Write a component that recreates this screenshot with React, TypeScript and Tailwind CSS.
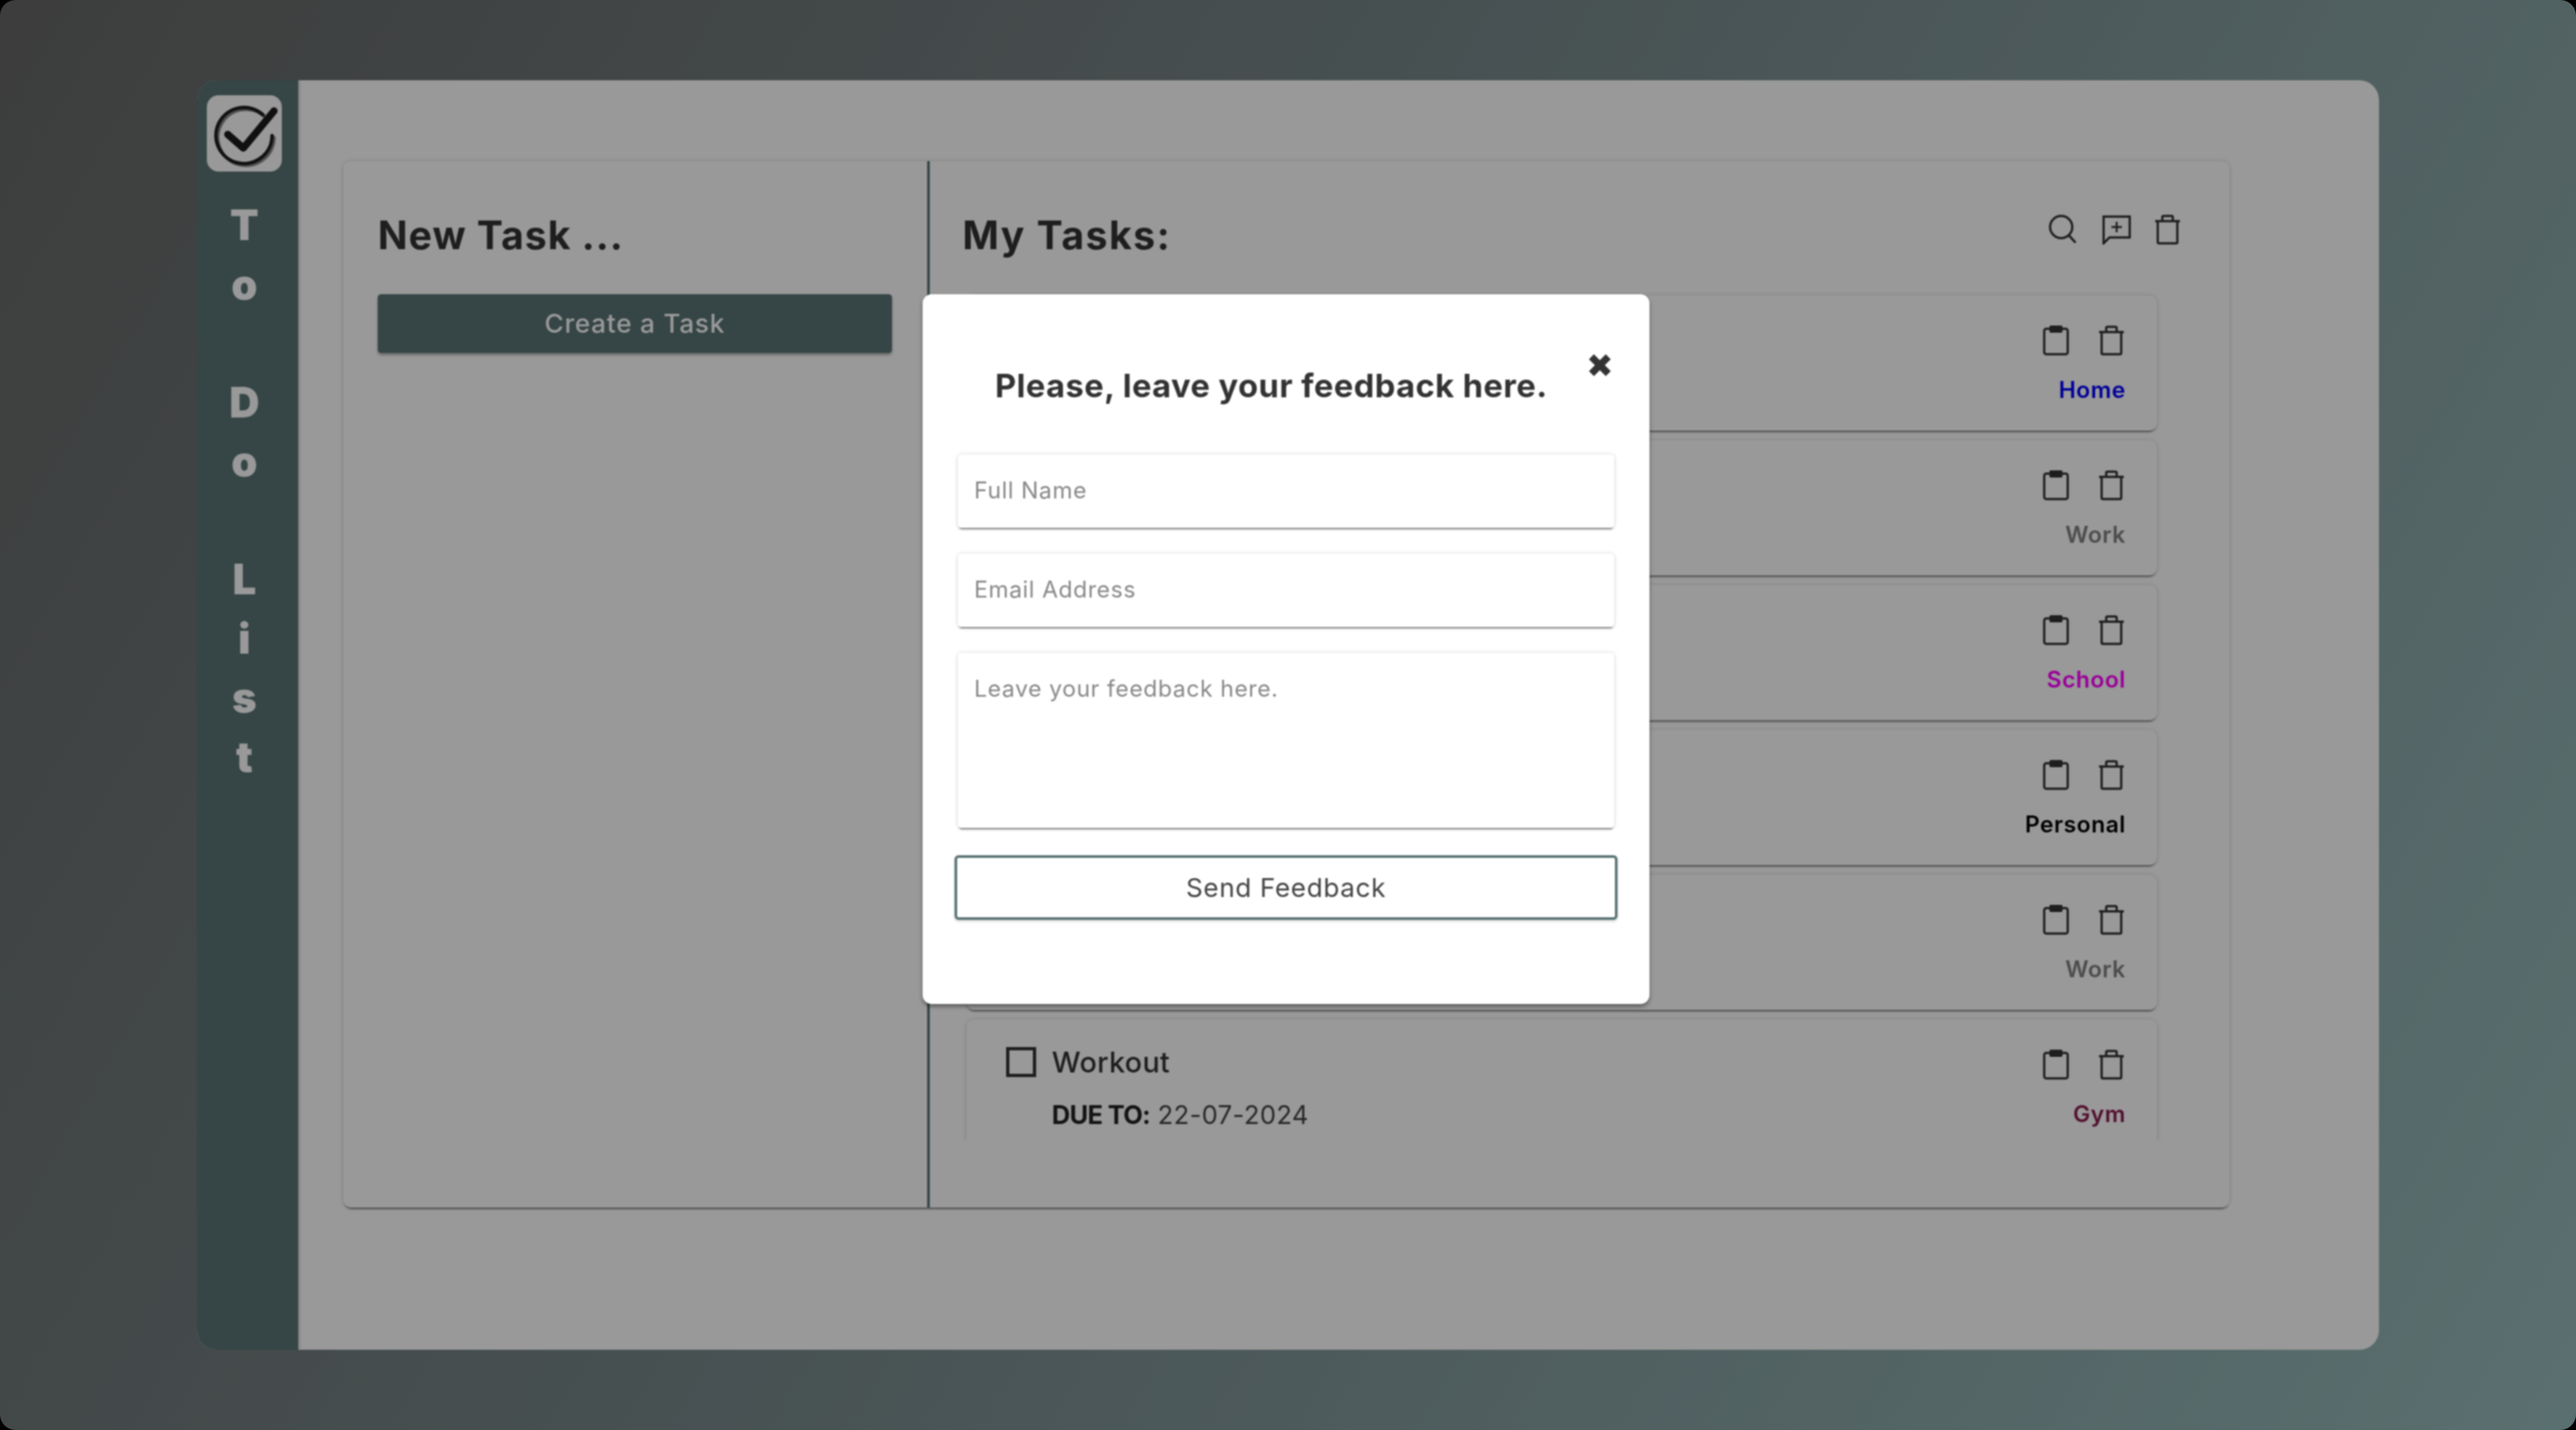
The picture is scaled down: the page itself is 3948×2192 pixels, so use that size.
const paperShadow = "shadow-[0_5px_3px_-3px_rgba(0,0,0,0.45),0_2px_3px_rgba(0,0,0,0.1),0_0_7px_rgba(0,0,0,0.14)]";

type Task = { title?: string; due?: string; label: string; color: string };

const tasks: Task[] = [
  { label: "Home", color: "text-[#0000ff]" },
  { label: "Work", color: "text-[#808080]" },
  { label: "School", color: "text-[#ff00ff]" },
  { label: "Personal", color: "text-black" },
  { label: "Work", color: "text-[#808080]" },
  { title: "Workout", due: "22-07-2024", label: "Gym", color: "text-[#8b1a4f]" },
];

const sideLetters = ["T", "o", "", "D", "o", "", "L", "i", "s", "t"];

function TrashIcon({ className }: { className: string }) {
  return (
    <svg viewBox="0 0 40 46" fill="none" stroke="#333" strokeWidth="3.5" className={className}>
      <path d="M12 9V4a2 2 0 0 1 2-2h12a2 2 0 0 1 2 2v5" />
      <path d="M1 10h38" />
      <path d="M5 10v32a2 2 0 0 0 2 2h26a2 2 0 0 0 2-2V10" />
    </svg>
  );
}

function ClipboardIcon() {
  return (
    <svg viewBox="0 0 40 46" fill="none" stroke="#333" strokeWidth="3.5" className="w-[40px] h-[46px]">
      <rect x="2" y="5" width="36" height="39" rx="3" />
      <rect x="10" y="0" width="20" height="11" rx="2" fill="#333" stroke="none" />
    </svg>
  );
}

function SearchIcon() {
  return (
    <svg viewBox="0 0 44 44" fill="none" stroke="#333" strokeWidth="3.5" className="w-[44px] h-[44px] mr-[3px]">
      <circle cx="20" cy="19" r="17" />
      <path d="M32 32l10 11" />
    </svg>
  );
}

function ChatPlusIcon() {
  return (
    <svg viewBox="0 0 44 46" fill="none" stroke="#333" strokeWidth="3.5" className="w-[44px] h-[46px]">
      <path d="M2 3h40v32H11l-9 9z" />
      <path d="M22 11v16M14 19h16" strokeWidth="3" />
    </svg>
  );
}

function Logo() {
  return (
    <svg viewBox="0 0 115 117" fill="none" className="w-[115px] h-[117px]">
      <path d="M86 30A43 43 0 1 0 100 62" stroke="#888" strokeWidth="5" strokeLinecap="round" transform="translate(3 3)" />
      <path d="M86 30A43 43 0 1 0 100 62" stroke="#1e1e1e" strokeWidth="5.5" strokeLinecap="round" />
      <path d="M32 60l24 21 47-57" stroke="#1c1c1c" strokeWidth="11" strokeLinecap="round" strokeLinejoin="round" />
    </svg>
  );
}

function TaskRow({ task }: { task: Task }) {
  return (
    <div className={`h-[207px] shrink-0 rounded-[12px] pl-[61px] pr-[48px] pt-[42px] flex justify-between bg-white ${paperShadow}`}>
      <div>
        {task.title && (
          <>
            <div className="flex items-center gap-[24px] h-[46px]">
              <span className="w-[46px] h-[46px] border-[5px] border-[#333]" />
              <span className="text-[44px] font-medium text-[#333] tracking-[0.5px]">{task.title}</span>
            </div>
            <div className="mt-[35px] ml-[70px] text-[39px] leading-[46px] text-[#444] tracking-[0.7px]">
              <span className="font-bold text-[#222] tracking-[-1px]">DUE TO:</span> {task.due}
            </div>
          </>
        )}
      </div>
      <div className="flex flex-col items-end">
        <div className="flex gap-[45px] h-[46px] mt-[4px] mr-[2px]">
          <ClipboardIcon />
          <TrashIcon className="w-[40px] h-[46px]" />
        </div>
        <span className={`mt-[29px] text-[35px] leading-[46px] font-semibold tracking-[0.8px] ${task.color}`}>{task.label}</span>
      </div>
    </div>
  );
}

function FeedbackModal() {
  const fieldClass = `w-full bg-white rounded-[5px] px-[25px] text-[35px] tracking-[1px] text-[#333] placeholder:text-[#888] outline-none ${paperShadow}`;
  return (
    <div className="absolute inset-0 bg-black/40 pt-[451px] pl-[1414px]">
      <div className="w-[1114px] h-[1088px] bg-white rounded-[14px] pl-[49px] pr-[49px] shadow-[0_4px_6px_rgba(0,0,0,0.4)] blur-[0.8px]">
        <div className="h-[246px] flex justify-between pl-[62px] pr-[6px]">
          <h2 className="mt-[110px] text-[50px] leading-[60px] font-bold text-[#333] tracking-[0.7px]">Please, leave your feedback here.</h2>
          <span className="mt-[78px] font-['DejaVu_Sans'] text-[50px] leading-[64px] text-[#333]">✖</span>
        </div>
        <div className="flex flex-col gap-[40px] px-[5px]">
          <input placeholder="Full Name" className={`${fieldClass} h-[112px] pb-[4px]`} />
          <input placeholder="Email Address" className={`${fieldClass} h-[112px] pb-[4px]`} />
          <textarea placeholder="Leave your feedback here." className={`${fieldClass} h-[268px] py-[28px] resize-none`} />
        </div>
        <button className="mt-[42px] w-full h-[99px] border-[4px] border-[#5a7373] rounded-[6px] text-[40px] tracking-[1px] text-[#444] bg-white shadow-[0_2px_4px_rgba(0,0,0,0.2)]">
          Send Feedback
        </button>
      </div>
    </div>
  );
}

export default function App() {
  return (
    <div className="relative w-[3948px] h-[2192px] bg-black overflow-hidden font-['Inter',sans-serif]">
      <div className="w-full h-full rounded-[24px] bg-[linear-gradient(120deg,#666666_0%,#7a8c8e_50%,#97baba_100%)] pt-[123px] pl-[302px]">
        <div className="w-[3344px] h-[1946px] bg-white rounded-[30px] overflow-hidden flex blur-[0.8px]">
          {/* side bar */}
          <aside className="w-[155px] shrink-0 bg-[#5a7373] flex flex-col items-center pt-[23px] pr-[10px] shadow-[2px_0_4px_rgba(0,0,0,0.2)]">
            <div className="w-[115px] h-[117px] bg-white rounded-[18px]">
              <Logo />
            </div>
            <div className="mt-[37px] flex flex-col items-center">
              {sideLetters.map((letter, i) => (
                <span key={i} className="h-[90.5px] text-[64px] leading-[90px] font-black text-white">
                  {letter}
                </span>
              ))}
            </div>
          </aside>

          <main className="flex-1 pl-[69px] pt-[124px]">
            <div className={`w-[2891px] h-[1604px] rounded-[12px] flex ${paperShadow}`}>
              <section className="w-[899px] shrink-0 border-r-[4px] border-[#5a7373] pl-[53px] pr-[54px] pt-[78px]">
                <h1 className="text-[60px] leading-[70px] font-bold text-[#333] tracking-[1.5px]">New Task ...</h1>
                <button className="mt-[56px] w-full h-[90px] bg-[#5a7373] text-white rounded-[5px] text-[40px] font-medium tracking-[1.2px] shadow-[0_3px_4px_rgba(0,0,0,0.35)]">
                  Create a Task
                </button>
              </section>

              <section className="flex-1 flex flex-col pl-[50px] pt-[78px]">
                <div className="flex justify-between pr-[75px] h-[122px]">
                  <h1 className="text-[60px] leading-[70px] font-bold text-[#333] tracking-[2.3px]">My Tasks:</h1>
                  <div className="flex gap-[36px] mt-[4px]">
                    <SearchIcon />
                    <ChatPlusIcon />
                    <TrashIcon className="w-[40px] h-[46px]" />
                  </div>
                </div>
                {/* scroll area, padded so the row shadows are not cut off */}
                <div className="w-[1841px] -ml-[2px] h-[1301px] overflow-hidden flex flex-col gap-[15px] px-[8px] pt-[6px]">
                  {tasks.map((task, i) => (
                    <TaskRow key={i} task={task} />
                  ))}
                </div>
              </section>
            </div>
          </main>
        </div>
      </div>
      <FeedbackModal />
    </div>
  );
}
